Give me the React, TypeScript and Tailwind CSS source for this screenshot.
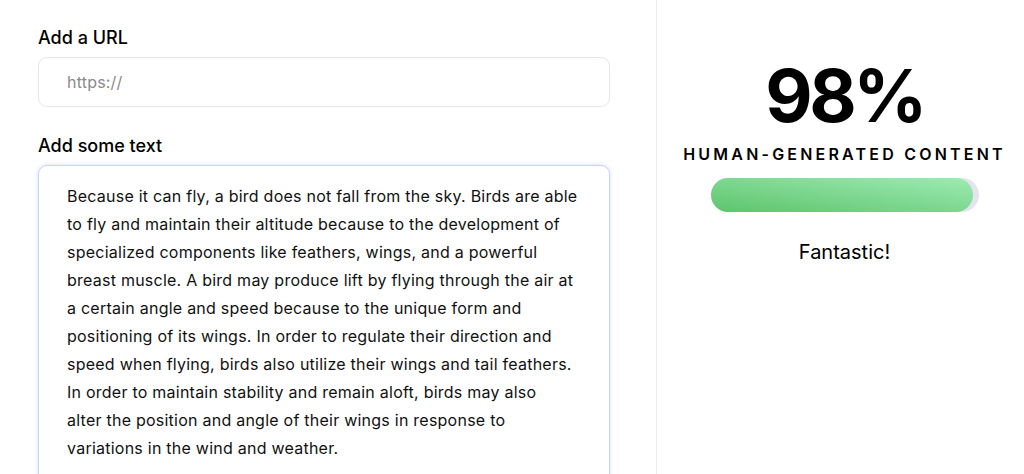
import React from "react";

const lines = [
  "Because it can fly, a bird does not fall from the sky. Birds are able",
  "to fly and maintain their altitude because to the development of",
  "specialized components like feathers, wings, and a powerful",
  "breast muscle. A bird may produce lift by flying through the air at",
  "a certain angle and speed because to the unique form and",
  "positioning of its wings. In order to regulate their direction and",
  "speed when flying, birds also utilize their wings and tail feathers.",
  "In order to maintain stability and remain aloft, birds may also",
  "alter the position and angle of their wings in response to",
  "variations in the wind and weather.",
];

export default function App() {
  return (
    <div className="flex h-[474px] w-[1024px] overflow-hidden bg-white font-['Inter',sans-serif] text-black">
      {/* Left: inputs */}
      <div className="w-[657px] shrink-0 border-r border-[#ececec] pl-[38px] pr-[46px] pt-[26px]">
        <label className="block text-[18px] font-medium leading-[24px]">Add a URL</label>
        <div className="mt-[7px] flex h-[50px] items-center rounded-[9px] border border-[#e6e6ee] px-[28px] text-[16px] tracking-[0.2px] text-[#8a8a8a]">
          https://
        </div>

        <label className="mt-[27px] block text-[18px] font-medium leading-[24px]">Add some text</label>
        <div className="mt-[7px] h-[400px] rounded-[9px] border border-[#c9d2fd] px-[28px] pt-[16px] text-[16px] leading-[28px] tracking-[0.24px] text-[#111] shadow-[0_0_4px_rgba(165,180,252,0.45)]">
          {lines.map((l) => (
            <div key={l} className="whitespace-nowrap">
              {l}
            </div>
          ))}
        </div>
      </div>

      {/* Right: score */}
      <div className="flex flex-1 flex-col items-center pl-[8px] pt-[59px]">
        <div className="text-[73px] font-bold leading-[74px] tracking-[-3.5px]">98%</div>
        <div className="mt-[9px] text-[16px] font-semibold uppercase tracking-[3.2px]">
          Human-Generated Content
        </div>
        <div className="relative mt-[12px] h-[34px] w-[268px] rounded-full bg-[#e4e4ee]">
          <div className="absolute inset-y-0 left-0 w-[262px] rounded-full bg-gradient-to-tr from-[#5cc46c] to-[#9debb3]" />
        </div>
        <div className="mt-[26px] text-[20px] leading-[28px]">Fantastic!</div>
      </div>
    </div>
  );
}
